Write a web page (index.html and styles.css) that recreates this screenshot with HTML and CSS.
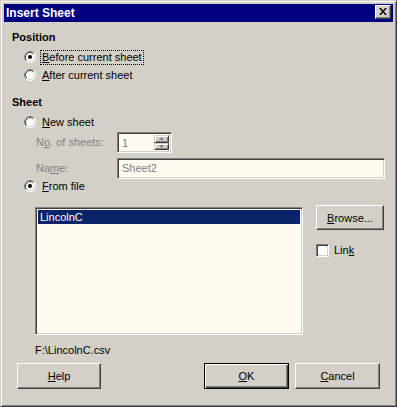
FILE: index.html
```html
<!DOCTYPE html>
<html>
<head>
<meta charset="utf-8">
<title>Insert Sheet</title>
<link rel="stylesheet" href="styles.css">
</head>
<body>
<div class="window">
  <div class="titlebar">
    <span class="title">Insert Sheet</span>
    <button class="close" aria-label="Close">
      <svg width="8" height="7" viewBox="0 0 8 7"><path d="M0 0h2l2 2.5 2-2.5h2l-3 3.5 3 3.5h-2l-2-2.5-2 2.5h-2l3-3.5z" fill="#000"/></svg>
    </button>
  </div>
  <div class="content">
    <div class="heading">Position</div>
    <div class="radio-row first">
      <span class="radio checked"><svg width="12" height="12" viewBox="0 0 12 12"><circle cx="6" cy="6" r="5.5" fill="#fff"/><path d="M2.11 9.89A5.5 5.5 0 0 1 9.89 2.11" fill="none" stroke="#808080"/><path d="M2.82 9.18A4.5 4.5 0 0 1 9.18 2.82" fill="none" stroke="#404040"/><path d="M9.89 2.11A5.5 5.5 0 0 1 2.11 9.89" fill="none" stroke="#fff"/><path d="M9.18 2.82A4.5 4.5 0 0 1 2.82 9.18" fill="none" stroke="#d4d0c8"/><circle cx="6" cy="6" r="2" fill="#000"/></svg></span>
      <span class="label focus"><u>B</u>efore current sheet</span>
    </div>
    <div class="radio-row">
      <span class="radio"><svg width="12" height="12" viewBox="0 0 12 12"><circle cx="6" cy="6" r="5.5" fill="#fff"/><path d="M2.11 9.89A5.5 5.5 0 0 1 9.89 2.11" fill="none" stroke="#808080"/><path d="M2.82 9.18A4.5 4.5 0 0 1 9.18 2.82" fill="none" stroke="#404040"/><path d="M9.89 2.11A5.5 5.5 0 0 1 2.11 9.89" fill="none" stroke="#fff"/><path d="M9.18 2.82A4.5 4.5 0 0 1 2.82 9.18" fill="none" stroke="#d4d0c8"/></svg></span>
      <span class="label"><u>A</u>fter current sheet</span>
    </div>

    <div class="heading sheet">Sheet</div>
    <div class="radio-row first">
      <span class="radio"><svg width="12" height="12" viewBox="0 0 12 12"><circle cx="6" cy="6" r="5.5" fill="#fff"/><path d="M2.11 9.89A5.5 5.5 0 0 1 9.89 2.11" fill="none" stroke="#808080"/><path d="M2.82 9.18A4.5 4.5 0 0 1 9.18 2.82" fill="none" stroke="#404040"/><path d="M9.89 2.11A5.5 5.5 0 0 1 2.11 9.89" fill="none" stroke="#fff"/><path d="M9.18 2.82A4.5 4.5 0 0 1 2.82 9.18" fill="none" stroke="#d4d0c8"/></svg></span>
      <span class="label"><u>N</u>ew sheet</span>
    </div>
    <div class="field-row first">
      <span class="field-label">N<u>o</u>. of sheets:</span>
      <div class="spin">
        <span class="spin-value">1</span>
        <div class="spin-buttons">
          <span class="spin-btn"><svg width="5" height="3" viewBox="0 0 5 3"><path d="M2.5 0L5 3H0z" fill="#808080"/></svg></span>
          <span class="spin-btn"><svg width="5" height="3" viewBox="0 0 5 3"><path d="M0 0h5L2.5 3z" fill="#808080"/></svg></span>
        </div>
      </div>
    </div>
    <div class="field-row">
      <span class="field-label">Na<u>m</u>e:</span>
      <div class="textbox">Sheet2</div>
    </div>
    <div class="radio-row fromfile">
      <span class="radio"><svg width="12" height="12" viewBox="0 0 12 12"><circle cx="6" cy="6" r="5.5" fill="#fff"/><path d="M2.11 9.89A5.5 5.5 0 0 1 9.89 2.11" fill="none" stroke="#808080"/><path d="M2.82 9.18A4.5 4.5 0 0 1 9.18 2.82" fill="none" stroke="#404040"/><path d="M9.89 2.11A5.5 5.5 0 0 1 2.11 9.89" fill="none" stroke="#fff"/><path d="M9.18 2.82A4.5 4.5 0 0 1 2.82 9.18" fill="none" stroke="#d4d0c8"/><circle cx="6" cy="6" r="2" fill="#000"/></svg></span>
      <span class="label"><u>F</u>rom file</span>
    </div>

    <div class="file-area">
      <div class="listbox">
        <div class="list-item selected">LincolnC</div>
      </div>
      <div class="side">
        <button class="btn browse"><u>B</u>rowse...</button>
        <div class="check-row">
          <span class="checkbox"></span>
          <span class="label">Lin<u>k</u></span>
        </div>
      </div>
    </div>
    <div class="path">F:\LincolnC.csv</div>
    <div class="buttons">
      <button class="btn help"><u>H</u>elp</button>
      <span class="spacer"></span>
      <button class="btn ok default"><u>O</u>K</button>
      <button class="btn cancel"><u>C</u>ancel</button>
    </div>
  </div>
</div>
</body>
</html>
```

FILE: styles.css
```css
html, body {
  margin: 0;
  padding: 0;
  background: #d4d0c8;
}

body {
  font-family: "Liberation Sans", Arial, sans-serif;
  font-size: 11px;
  color: #000;
}

.window {
  width: 397px;
  height: 407px;
  box-sizing: border-box;
  background: #d4d0c8;
  border: 1px solid;
  border-color: #d4d0c8 #404040 #404040 #d4d0c8;
  box-shadow: inset 1px 1px #fff, inset -1px -1px #808080;
  padding: 3px;
  display: flex;
  flex-direction: column;
}

.titlebar {
  height: 18px;
  background: #000080;
  display: flex;
  align-items: flex-start;
  justify-content: space-between;
  flex-shrink: 0;
}

.title {
  color: #fff;
  font-weight: bold;
  font-size: 12px;
  line-height: 18px;
  padding-left: 2px;
}

.close {
  width: 16px;
  height: 14px;
  margin: 1px 2px 0 0;
  padding: 0;
  box-sizing: border-box;
  background: #d4d0c8;
  border: 1px solid;
  border-color: #fff #404040 #404040 #fff;
  box-shadow: inset -1px -1px #808080;
  display: flex;
  align-items: center;
  justify-content: center;
}

.close svg {
  display: block;
  margin: 0 1px 1px 0;
}

.content {
  padding: 9px 0 0 8px;
  display: flex;
  flex-direction: column;
}

.heading {
  font-weight: bold;
  line-height: 13px;
  height: 13px;
}

.heading.sheet {
  margin-top: 12px;
}

.radio-row {
  height: 18px;
  display: flex;
  align-items: center;
  margin-left: 12px;
}

.radio-row.first {
  margin-top: 4px;
}

.radio-row.fromfile {
  margin-top: -2px;
}

.radio {
  width: 12px;
  height: 12px;
  display: block;
  margin-right: 4px;
}

.radio svg {
  display: block;
}

.label {
  line-height: 13px;
  padding: 0 1px;
  border: 1px dotted transparent;
}

.label.focus {
  border-color: #000;
}

u {
  text-decoration: underline;
  text-underline-offset: 1px;
}

.field-row {
  height: 21px;
  display: flex;
  align-items: center;
  margin-left: 24px;
}

.field-row.first {
  margin-top: 1px;
}

.field-row + .field-row {
  margin-top: 5px;
}

.field-label {
  width: 81px;
  color: #808080;
  line-height: 13px;
}

.spin,
.textbox,
.listbox {
  box-sizing: border-box;
  background: #fffbf0;
  border: 1px solid;
  border-color: #808080 #fff #fff #808080;
  box-shadow: inset 1px 1px #404040, inset -1px -1px #d4d0c8;
}

.spin {
  width: 55px;
  height: 21px;
  display: flex;
  align-items: stretch;
  padding: 2px;
}

.spin-value {
  flex: 1;
  color: #808080;
  line-height: 17px;
  padding-left: 2px;
}

.spin-buttons {
  width: 15px;
  display: flex;
  flex-direction: column;
}

.spin-btn {
  flex: 1;
  box-sizing: border-box;
  background: #d4d0c8;
  border: 1px solid;
  border-color: #d4d0c8 #404040 #404040 #d4d0c8;
  box-shadow: inset 1px 1px #fff, inset -1px -1px #808080;
  display: flex;
  align-items: center;
  justify-content: center;
}

.spin-btn svg {
  display: block;
}

.textbox {
  width: 268px;
  height: 21px;
  color: #808080;
  line-height: 19px;
  padding-left: 4px;
}

.file-area {
  display: flex;
  align-items: flex-start;
  margin-top: 10px;
  margin-left: 23px;
}

.listbox {
  width: 268px;
  height: 128px;
  padding: 2px;
  margin-top: 2px;
}

.list-item {
  height: 14px;
  line-height: 14px;
  padding-left: 2px;
}

.list-item.selected {
  background: #0a246a;
  color: #fff;
}

.side {
  margin-left: 13px;
  display: flex;
  flex-direction: column;
}

.btn {
  font-family: "Liberation Sans", Arial, sans-serif;
  font-size: 11px;
  color: #000;
  box-sizing: border-box;
  background: #d4d0c8;
  border: 1px solid;
  border-color: #fff #404040 #404040 #fff;
  box-shadow: inset -1px -1px #808080;
  padding: 0;
  display: flex;
  align-items: center;
  justify-content: center;
}

.btn.default {
  border-color: #000;
  box-shadow: inset 1px 1px #fff, inset -1px -1px #404040, inset -2px -2px #808080;
}

.browse {
  width: 68px;
  height: 25px;
}

.check-row {
  display: flex;
  align-items: center;
  margin-top: 13px;
}

.checkbox {
  width: 13px;
  height: 13px;
  box-sizing: border-box;
  background: #fff;
  border: 1px solid;
  border-color: #808080 #fff #fff #808080;
  box-shadow: inset 1px 1px #404040, inset -1px -1px #d4d0c8;
  margin-right: 3px;
}

.path {
  margin: 9px 0 0 23px;
  line-height: 13px;
  height: 13px;
}

.buttons {
  display: flex;
  margin: 6px 13px 0 5px;
}

.buttons .btn {
  height: 26px;
}

.help {
  width: 84px;
}

.spacer {
  flex: 1;
}

.ok,
.cancel {
  width: 85px;
}

.cancel {
  margin-left: 6px;
}
```
